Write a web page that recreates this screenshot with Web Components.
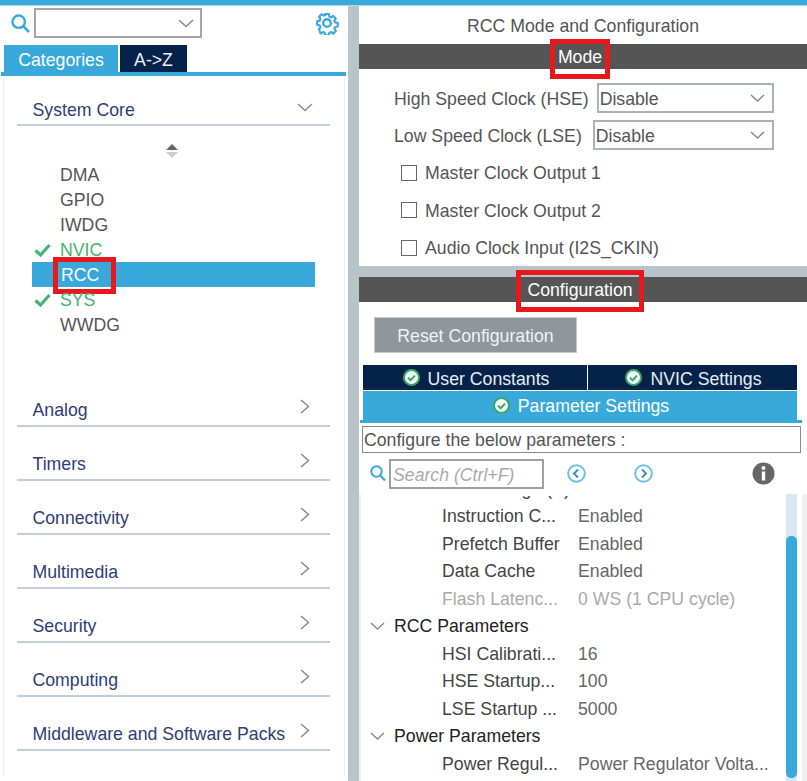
<!DOCTYPE html>
<html lang="en"><head><meta charset="utf-8"><title>RCC Mode and Configuration</title>
<style>
html,body{margin:0;padding:0;height:100%;overflow:hidden;background:#fff;font:17.7px/1.2 "Liberation Sans",Arial,sans-serif}
</style></head><body>
<cube-app>
  <cube-sidebar slot="left">
    <cat-row open>System Core</cat-row>
    <periph-list>
      <periph-item>DMA</periph-item>
      <periph-item>GPIO</periph-item>
      <periph-item>IWDG</periph-item>
      <periph-item ok>NVIC</periph-item>
      <periph-item selected>RCC<red-box slot="mark" style="--l:21px;--t:-5px;--w:53px;--h:27px"></red-box></periph-item>
      <periph-item ok>SYS</periph-item>
      <periph-item>WWDG</periph-item>
    </periph-list>
    <cat-row>Analog</cat-row>
    <cat-row>Timers</cat-row>
    <cat-row>Connectivity</cat-row>
    <cat-row>Multimedia</cat-row>
    <cat-row>Security</cat-row>
    <cat-row>Computing</cat-row>
    <cat-row>Middleware and Software Packs</cat-row>
  </cube-sidebar>
  <cube-config slot="right">
    <section-bar slot="mode-bar" box-w="60" box-h="40" box-t="-5">Mode</section-bar>
    <clock-select slot="mode" label="High Speed Clock (HSE)" gap="8" style="margin-top:14px">Disable</clock-select>
    <clock-select slot="mode" label="Low Speed Clock (LSE)" gap="11" style="margin-top:7px">Disable</clock-select>
    <check-row slot="mode" style="margin-top:5px">Master Clock Output 1</check-row>
    <check-row slot="mode">Master Clock Output 2</check-row>
    <check-row slot="mode">Audio Clock Input (I2S_CKIN)</check-row>
    <section-bar slot="conf-bar" box-w="128" box-h="42" box-t="-7">Configuration</section-bar>
    <param-tree slot="tree">
      <param-row clipped name="VDD voltage (V)"></param-row>
      <param-row name="Instruction C...">Enabled</param-row>
      <param-row name="Prefetch Buffer">Enabled</param-row>
      <param-row name="Data Cache">Enabled</param-row>
      <param-row disabled name="Flash Latenc...">0 WS (1 CPU cycle)</param-row>
      <param-row group name="RCC Parameters"></param-row>
      <param-row name="HSI Calibrati...">16</param-row>
      <param-row name="HSE Startup...">100</param-row>
      <param-row name="LSE Startup ...">5000</param-row>
      <param-row group name="Power Parameters"></param-row>
      <param-row name="Power Regul...">Power Regulator Volta...</param-row>
    </param-tree>
  </cube-config>
</cube-app>
<script>
const SANS = '"Liberation Sans",Arial,sans-serif';
const BLUE = '#39a9dc', NAVY = '#04224a';
function def(name, html, extra) {
  customElements.define(name, class extends HTMLElement {
    constructor() {
      super();
      const r = this.attachShadow({mode: 'open'});
      r.innerHTML = typeof html === 'function' ? html(this) : html;
      if (extra) extra(this, r);
    }
  });
}
const tabCheck = `<svg width="17" height="17" viewBox="0 0 17 17" style="flex:none"><circle cx="8.5" cy="8.5" r="7.5" fill="#f4fbf6" stroke="#3aa76a" stroke-width="2"/><path d="M5 8.6l2.6 2.6L12 6.6" fill="none" stroke="#3aa76a" stroke-width="2"/></svg>`;

def('cube-app', `<style>
:host{display:block;width:807px;height:781px;overflow:hidden;background:#fff;color:#555;font:17.7px/1.2 ${SANS}}
.stripe{height:5px;background:${BLUE};border-bottom:1px solid #a9d9f0}
.main{display:grid;grid-template-columns:348px 11px 448px;height:775px}
.split{background:#b9c4ca}
</style><div class="stripe"></div><div class="main"><slot name="left"></slot><div class="split"></div><slot name="right"></slot></div>`);

def('cube-sidebar', `<style>
:host{display:block;height:775px;overflow:hidden;background:#fff}
.tools{display:flex;align-items:center;height:39px;padding:0 7px 5px 11px;box-sizing:border-box}
.combo{width:168px;height:30px;box-sizing:border-box;border:2px solid #a6a6a6;margin-left:4px;display:flex;align-items:center;justify-content:flex-end;padding-right:6px}
.gear{margin-left:auto;margin-right:2px}
.tabs{display:flex;height:27px;padding-left:4px;gap:2px}
.tab{display:flex;align-items:center;justify-content:center;color:#fff;background:${BLUE};width:114px;padding-top:4px;box-sizing:border-box}
.tab.b{background:${NAVY};width:67px;color:#eef}
.rule{height:4px;background:${BLUE};margin-left:1px;margin-right:2px}
.panel{margin-left:3px;margin-right:3px;height:700px;border-left:1px solid #eee;border-right:1px solid #eee;padding:0 14px 0 13px;box-sizing:border-box}
.top{height:14px}
</style>
<div class="tools">
<svg width="19" height="19" viewBox="0 0 19 19"><circle cx="7.7" cy="7.7" r="6.2" fill="none" stroke="${BLUE}" stroke-width="2.4"/><path d="M12.2 12.2l5.8 5.8" stroke="${BLUE}" stroke-width="2.6"/></svg>
<div class="combo"><svg width="16" height="9" viewBox="0 0 16 9"><path d="M1 1l7 6.5L15 1" fill="none" stroke="#8a8a8a" stroke-width="1.6"/></svg></div>
<svg class="gear" width="24" height="24" viewBox="0 0 24 24"><g fill="none" stroke="${BLUE}"><circle cx="12" cy="12" r="3.8" stroke-width="2.4"/><path stroke-width="2.4" stroke-linejoin="round" d="M10 2h4l.6 2.9 1.9.8 2.5-1.6 2.8 2.8-1.6 2.5.8 1.9 2.9.6v4l-2.9.6-.8 1.9 1.6 2.5-2.8 2.8-2.5-1.6-1.9.8-.6 2.9h-4l-.6-2.9-1.9-.8-2.5 1.6L3.1 19l1.6-2.5-.8-1.9L1 14v-4l2.9-.6.8-1.9L3.1 5l2.8-2.8 2.5 1.6 1.9-.8z" transform="translate(1.2 1.2) scale(.9)"/></g></svg>
</div>
<div class="tabs"><div class="tab">Categories</div><div class="tab b">A-&gt;Z</div></div>
<div class="rule"></div>
<div class="panel"><div class="top"></div><slot></slot></div>`);

def('cat-row', el => `<style>
:host{display:flex;height:54px;box-sizing:border-box;border-bottom:2px solid #c3cedc;color:#2f3d75;padding:0 17px 0 15.5px;align-items:flex-end}
:host([open]){height:36px}
.t{line-height:22px;padding-bottom:${el.hasAttribute('open') ? 3 : 4.5}px;white-space:nowrap}
svg{margin-left:auto;align-self:flex-end;margin-bottom:${el.hasAttribute('open') ? 12 : 11}px;flex:none}
</style><span class="t"><slot></slot></span>${el.hasAttribute('open')
  ? `<svg width="16" height="9" viewBox="0 0 16 9"><path d="M1 1l7 6.5L15 1" fill="none" stroke="#8a8a8a" stroke-width="1.5"/></svg>`
  : `<svg width="10" height="15" viewBox="0 0 10 15" style="margin-right:3px"><path d="M1 1l7.5 6.5L1 14" fill="none" stroke="#8a8a8a" stroke-width="1.5"/></svg>`}`);

def('periph-list', `<style>
:host{display:block;height:193px;padding:18px 15px 0 15px;margin-bottom:36px}
.arrows{display:flex;flex-direction:column;align-items:center;gap:2px;height:18px;width:279px}
.arrows i{display:block;width:0;height:0;border-left:6px solid transparent;border-right:6px solid transparent}
.u{border-bottom:6px solid #666}
.d{border-top:6px solid #ccc}
</style><div class="arrows"><i class="u"></i><i class="d"></i></div><slot></slot>`);

def('periph-item', el => `<style>
:host{display:flex;align-items:center;height:25px;width:283px;color:#555;white-space:nowrap;position:relative}
:host([ok]){color:#46b36e}
:host([selected]){background:${BLUE};color:#fff}
.ic{width:28px;flex:none;display:flex;padding-left:2px;box-sizing:border-box}
.tx{padding-top:3px;${el.hasAttribute('selected') ? 'padding-left:1px;' : ''}}
</style><span class="ic">${el.hasAttribute('ok') ? `<svg width="17" height="14" viewBox="0 0 17 14"><path d="M1.5 7.5l5 4.5L15.5 2" fill="none" stroke="#41b47a" stroke-width="3.2"/></svg>` : ''}</span><span class="tx"><slot></slot></span><slot name="mark"></slot>`);

def('red-box', `<style>
:host{position:absolute;left:var(--l);top:var(--t);width:var(--w);height:var(--h);border:5px solid #e8191c;display:block}
</style>`);

def('section-bar', el => {
  const w = +el.getAttribute('box-w'), h = +el.getAttribute('box-h'), t = +el.getAttribute('box-t');
  return `<style>
:host{display:flex;align-items:center;justify-content:center;height:25px;box-sizing:border-box;padding:2px 6px 0 0;background:#545554;color:#fff;position:relative}
.b{position:absolute;box-sizing:border-box;border:5px solid #e8191c;left:50%;margin-left:${-w/2 - 3}px;top:${t}px;width:${w}px;height:${h}px}
</style><slot></slot><div class="b"></div>`;
});

def('clock-select', el => `<style>
:host{display:flex;align-items:center;height:30px;padding:0 33px 0 35px;color:#555}
.l{white-space:nowrap;margin-right:${el.getAttribute('gap')}px;padding-top:3px}
.s{flex:1;height:30px;box-sizing:border-box;border:2px solid #a9b3b9;display:flex;align-items:center;padding:0 7px 0 1px}
.v{padding-top:3px}
svg{margin-left:auto}
</style><span class="l">${el.getAttribute('label')}</span><div class="s"><span class="v"><slot></slot></span><svg width="15" height="9" viewBox="0 0 15 9"><path d="M1 1l6.5 6L14 1" fill="none" stroke="#8a8a8a" stroke-width="1.5"/></svg></div>`);

def('check-row', `<style>
:host{display:flex;align-items:center;height:37.5px;padding-left:42px;color:#555;gap:8px}
i{display:block;width:16px;height:16px;box-sizing:border-box;border:1.5px solid #666;flex:none;margin-top:-2px}
</style><i></i><span><slot></slot></span>`);

def('cube-config', `<style>
:host{display:flex;flex-direction:column;height:775px;overflow:hidden;background:#fff}
.title{height:38px;display:flex;align-items:center;justify-content:center;color:#555;padding-top:3px;box-sizing:border-box}
.mode{height:197px}
.gap{height:11px;background:#b9c4ca}
.btn{width:203px;height:36px;margin:15px 0 12px 15px;background:#8f969c;color:#f2f2f2;display:flex;align-items:center;justify-content:center;border:1px solid #c4c8cb;box-sizing:border-box;padding-top:3px}
.tabs{display:grid;grid-template-columns:224px 209px;gap:1px 1px;margin-left:4px;width:434px}
.tab{height:25px;background:${NAVY};color:#e9edf3;display:flex;align-items:center;justify-content:center;gap:8px;padding-left:2px;box-sizing:border-box}
.tab span{padding-top:4px}
.tab.on{grid-column:1/3;background:${BLUE};color:#fff;height:29px}
.tab.on span{padding-top:3px}
.rule{height:3px;background:${BLUE};margin:0 5px 0 1px}
.cfg{height:27px;margin:3px 6px 0 3px;border:1.5px solid #8a8a8a;box-sizing:border-box;display:flex;align-items:center;color:#555;padding:3px 0 0 1px;white-space:nowrap}
.srch{display:flex;align-items:center;height:30px;margin-top:6px;padding-left:11px}
.srch svg{margin-bottom:2px}
.inp{width:155px;height:30px;box-sizing:border-box;border:2px solid #a0a0a0;margin-left:3px;color:#aaa;font-style:italic;display:flex;align-items:center;padding:3px 0 0 2px;white-space:nowrap}
.n1{margin-left:23px}.n2{margin-left:48px}.i{margin-left:99px}
.body{flex:1;min-height:0;display:flex;overflow:hidden;margin-top:5px}
.lft{width:2px;background:#f0f0f0}
.tree{flex:1;min-width:0;overflow:hidden;margin-top:2px}
.bar{width:11px;background:#d7e7f4;margin-right:5px}
.bar b{display:block;background:${BLUE};border-radius:5px;height:242px;margin-top:42px}
.rgt{width:5px;background:#f0f0f0}
</style>
<div class="title">RCC Mode and Configuration</div>
<slot name="mode-bar"></slot>
<div class="mode"><slot name="mode"></slot></div>
<div class="gap"></div>
<slot name="conf-bar"></slot>
<div class="btn">Reset Configuration</div>
<div class="tabs">
  <div class="tab">${tabCheck}<span>User Constants</span></div>
  <div class="tab">${tabCheck}<span>NVIC Settings</span></div>
  <div class="tab on">${tabCheck}<span>Parameter Settings</span></div>
</div>
<div class="rule"></div>
<div class="cfg">Configure the below parameters :</div>
<div class="srch">
<svg width="16" height="17" viewBox="0 0 16 17"><circle cx="6.5" cy="6.5" r="5.2" fill="none" stroke="${BLUE}" stroke-width="2"/><path d="M10.3 10.5l4.7 5" stroke="${BLUE}" stroke-width="2.2"/></svg>
<div class="inp">Search (Ctrl+F)</div>
<svg class="n1" width="19" height="19" viewBox="0 0 19 19"><circle cx="9.5" cy="9.5" r="8.3" fill="none" stroke="#6cc0e6" stroke-width="2"/><path d="M11 5.5l-4 4 4 4" fill="none" stroke="#3a8dbd" stroke-width="2"/></svg>
<svg class="n2" width="19" height="19" viewBox="0 0 19 19"><circle cx="9.5" cy="9.5" r="8.3" fill="none" stroke="#6cc0e6" stroke-width="2"/><path d="M8 5.5l4 4-4 4" fill="none" stroke="#3a8dbd" stroke-width="2"/></svg>
<svg class="i" width="23" height="23" viewBox="0 0 23 23"><circle cx="11.5" cy="11.5" r="11" fill="#666"/><rect x="9.8" y="9.5" width="3.4" height="9" fill="#fff"/><circle cx="11.5" cy="6" r="2" fill="#fff"/></svg>
</div>
<div class="body"><div class="lft"></div><div class="tree"><slot name="tree"></slot></div><div class="bar"><b></b></div><div class="rgt"></div></div>`);

def('param-tree', `<style>:host{display:block;margin-top:-20.5px}</style><slot></slot>`);

def('param-row', el => {
  const g = el.hasAttribute('group');
  return `<style>
:host{display:flex;align-items:center;height:27.5px;white-space:nowrap;color:${el.hasAttribute('disabled') ? '#aaa' : '#444'}}
:host([group]){color:#222}
.n{${g ? 'margin-left:9px' : 'width:136px;margin-left:81px'};overflow:hidden}
.v{color:${el.hasAttribute('disabled') ? '#aaa' : '#666'}}
svg{margin-left:9px;flex:none}
</style>${g ? `<svg width="15" height="9" viewBox="0 0 15 9"><path d="M1 1l6.5 6L14 1" fill="none" stroke="#8a8a8a" stroke-width="1.4"/></svg>` : ''}<span class="n">${el.getAttribute('name')}</span><span class="v"><slot></slot></span>`;
});
</script>
</body></html>
